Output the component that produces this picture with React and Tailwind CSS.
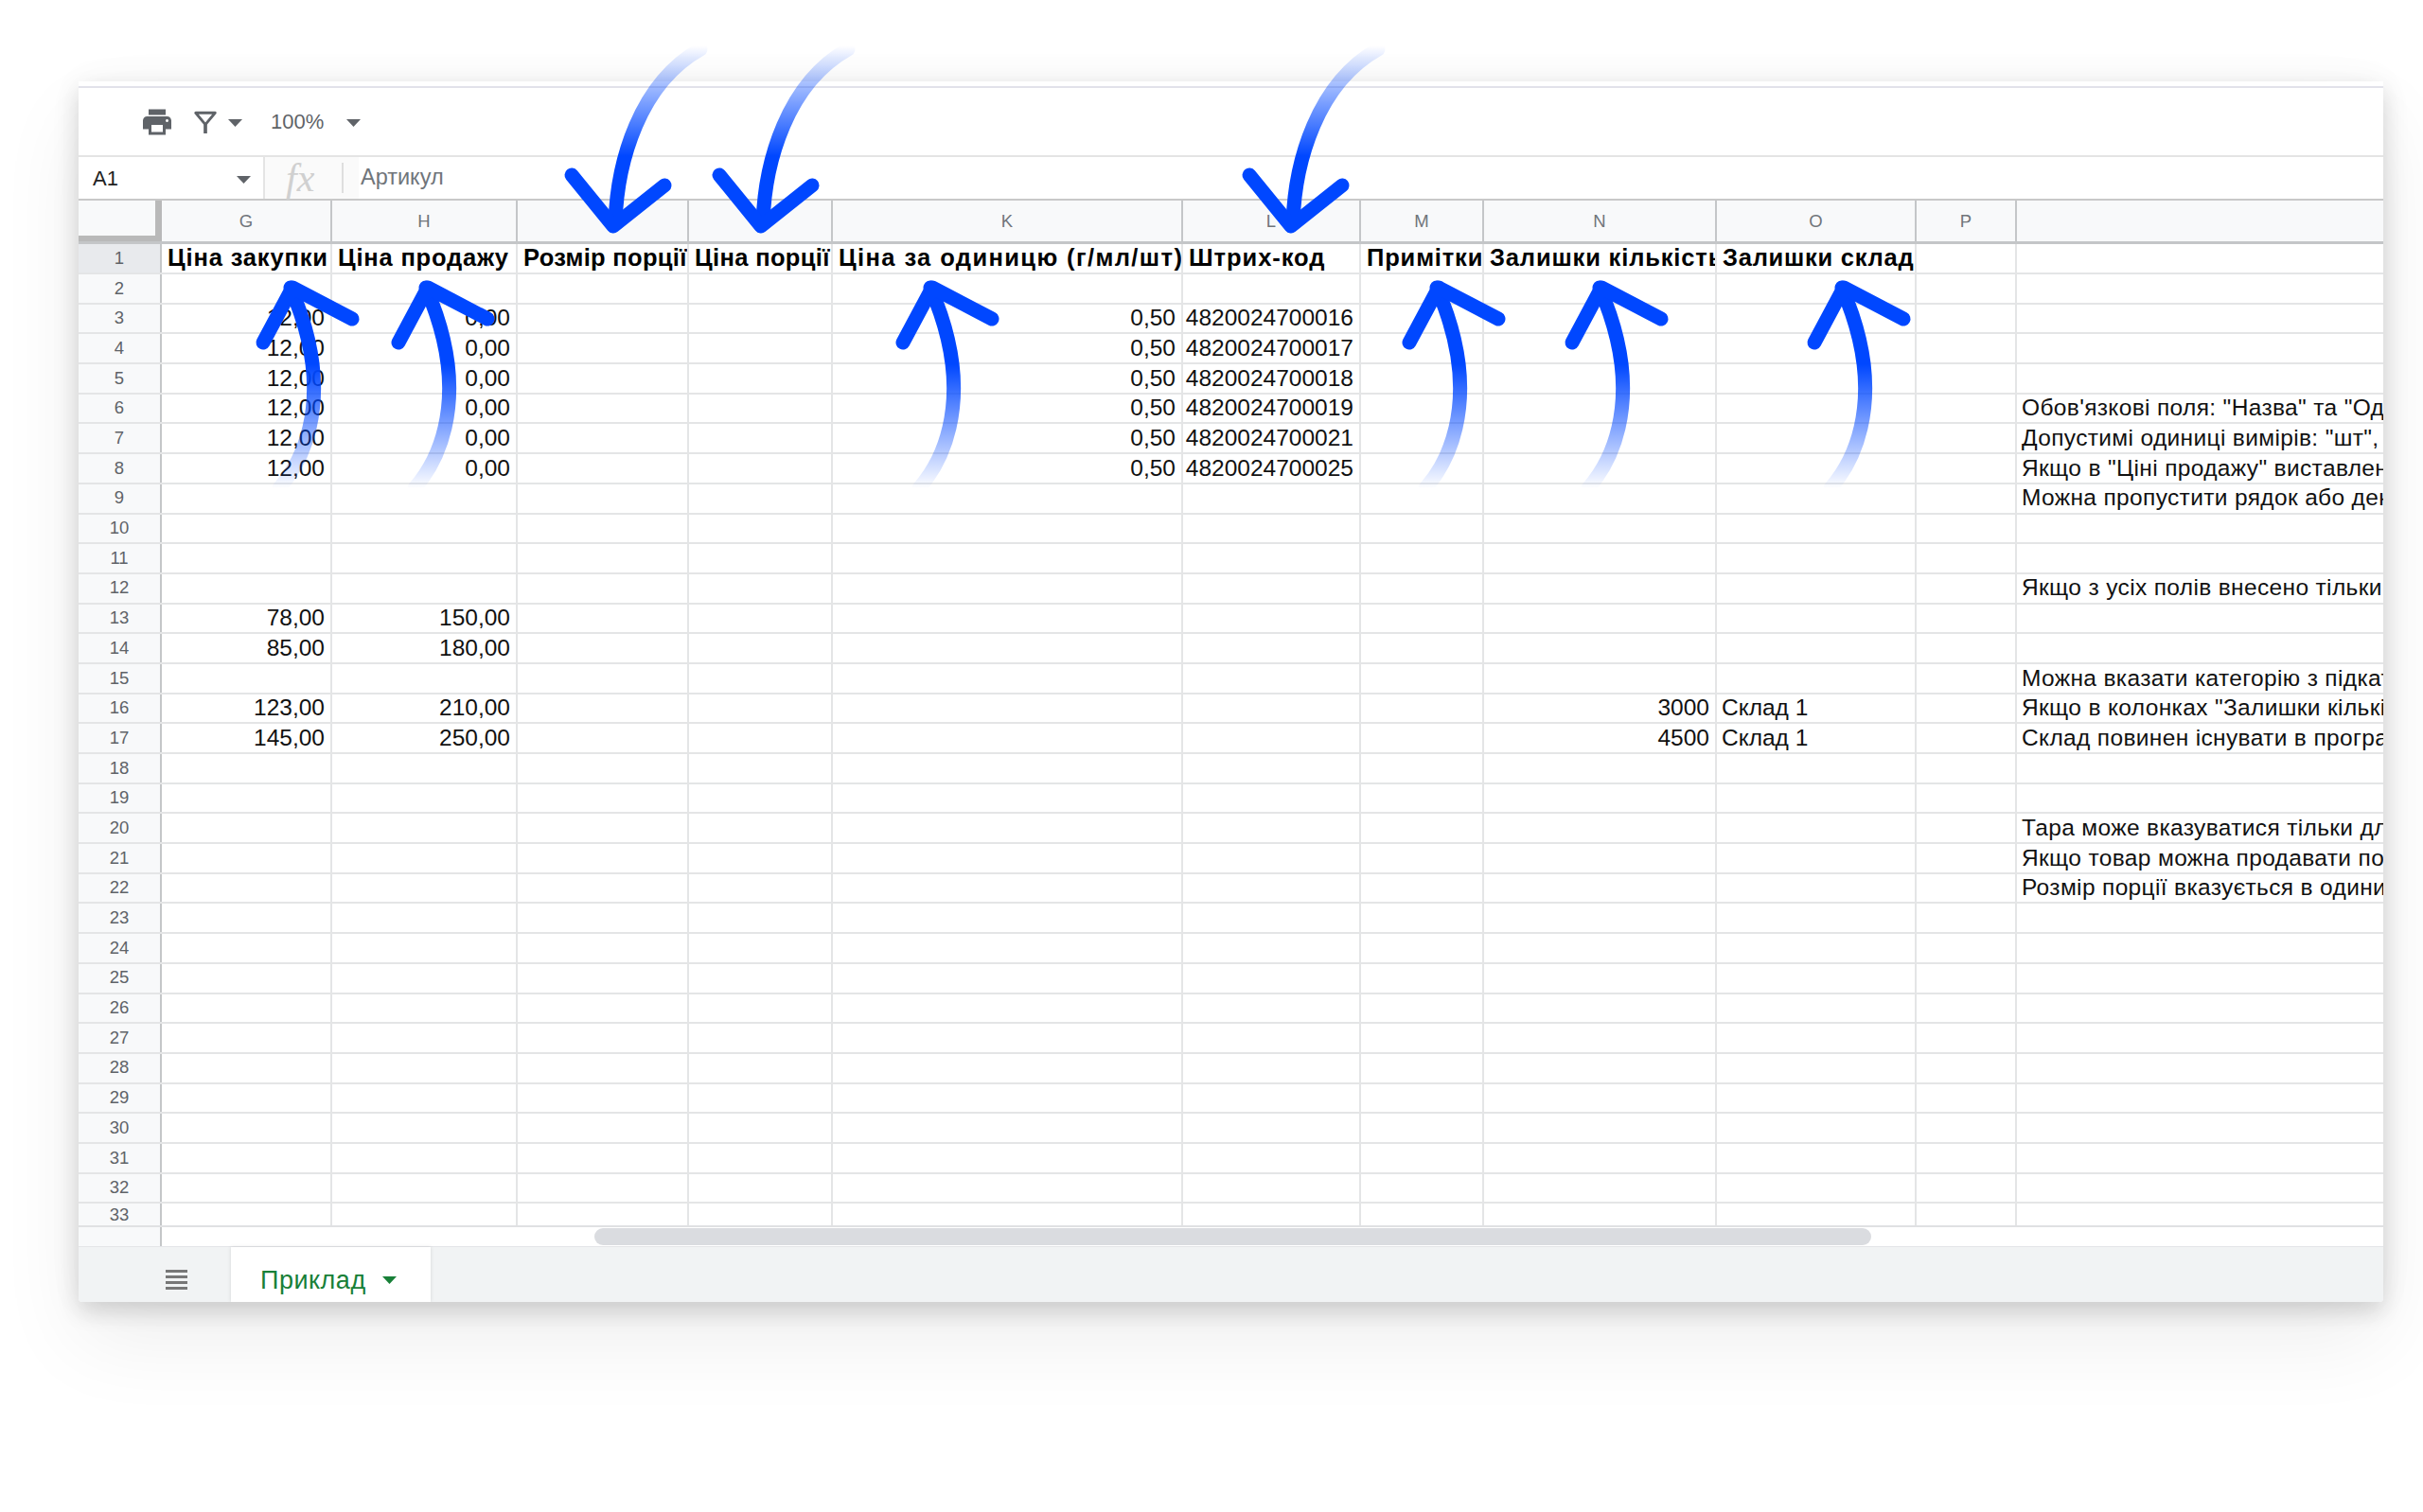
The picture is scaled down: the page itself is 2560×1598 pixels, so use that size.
const cols = "grid grid-cols-[88px_180px_196px_181px_152px_370px_188px_130px_246px_211px_106px_387px]";

const letters = ["G", "H", "", "", "K", "L", "M", "N", "O", "P", ""];
const heads = [
  { text: "Ціна закупки", track: "tracking-[0.85px]" },
  { text: "Ціна продажу", track: "tracking-[0.8px]" },
  { text: "Розмір порції", track: "tracking-[0.3px]" },
  { text: "Ціна порції", track: "tracking-[0.35px]" },
  { text: "Ціна за одиницю (г/мл/шт)", track: "tracking-[1.4px]" },
  { text: "Штрих-код", track: "tracking-[0.95px]" },
  { text: "Примітки", track: "tracking-[0.85px]" },
  { text: "Залишки кількість", track: "tracking-[0.85px]" },
  { text: "Залишки склад", track: "tracking-[0.75px]" },
  { text: "", track: "" },
  { text: "", track: "" },
];

// column order: G H I J K L M N O P Q
const rowData = {
  3: { G: "12,00", H: "0,00", K: "0,50", L: "4820024700016" },
  4: { G: "12,00", H: "0,00", K: "0,50", L: "4820024700017" },
  5: { G: "12,00", H: "0,00", K: "0,50", L: "4820024700018" },
  6: { G: "12,00", H: "0,00", K: "0,50", L: "4820024700019", Q: "Обов'язкові поля: \"Назва\" та \"Одиниця\"" },
  7: { G: "12,00", H: "0,00", K: "0,50", L: "4820024700021", Q: "Допустимі одиниці вимірів: \"шт\", \"кг\"" },
  8: { G: "12,00", H: "0,00", K: "0,50", L: "4820024700025", Q: "Якщо в \"Ціні продажу\" виставлено" },
  9: { Q: "Можна пропустити рядок або декілька" },
  12: { Q: "Якщо з усіх полів внесено тільки назву" },
  13: { G: "78,00", H: "150,00" },
  14: { G: "85,00", H: "180,00" },
  15: { Q: "Можна вказати категорію з підкатегорією" },
  16: { G: "123,00", H: "210,00", N: "3000", O: "Склад 1", Q: "Якщо в колонках \"Залишки кількість\"" },
  17: { G: "145,00", H: "250,00", N: "4500", O: "Склад 1", Q: "Склад повинен існувати в програмі" },
  20: { Q: "Тара може вказуватися тільки для" },
  21: { Q: "Якщо товар можна продавати порціями" },
  22: { Q: "Розмір порції вказується в одиницях" },
};

const keys = ["G", "H", "I", "J", "K", "L", "M", "N", "O", "P", "Q"];
const rightAligned = ["G", "H", "K", "L", "N"];

const upTips = [309, 452, 985, 1520, 1692, 1948];
const downTips = [648, 804, 1364];

function Caret({ className }) {
  return (
    <svg width="15" height="8" viewBox="0 0 15 8" className={className}>
      <path d="M0 0h15L7.5 8z" fill="currentColor" />
    </svg>
  );
}

function Row({ n, data, last }) {
  return (
    <div className={`${cols} ${last ? "h-[23px]" : "h-[31.7px] border-b-2 border-[#e4e5e6]"} text-[24.5px] leading-none text-[#111]`}>
      <div className="flex items-center justify-center border-r-2 border-[#c4c6c8] bg-[#f8f9fa] text-[18.5px] text-[#5f6368]">{n}</div>
      {keys.map((k) => (
        <div
          key={k}
          className={`flex items-center overflow-hidden whitespace-nowrap ${k === "Q" ? "tracking-[0.35px]" : "border-r-2 border-[#e4e5e6]"} ${rightAligned.includes(k) ? "justify-end px-[6px]" : "px-[5px]"}`}
        >
          {data?.[k]}
        </div>
      ))}
    </div>
  );
}

function Arrows() {
  return (
    <svg width="2560" height="1598" viewBox="0 0 2560 1598" fill="none" className="absolute left-0 top-0 pointer-events-none">
      <defs>
        <linearGradient id="upFade" gradientUnits="userSpaceOnUse" x1="0" y1="385" x2="0" y2="516">
          <stop offset="0" stopColor="#0047ff" />
          <stop offset="1" stopColor="#0047ff" stopOpacity="0" />
        </linearGradient>
        <linearGradient id="downFade" gradientUnits="userSpaceOnUse" x1="0" y1="165" x2="0" y2="48">
          <stop offset="0" stopColor="#0047ff" />
          <stop offset="1" stopColor="#0047ff" stopOpacity="0" />
        </linearGradient>
      </defs>
      {upTips.map((x) => (
        <g key={x} transform={`translate(${x} 0)`} strokeLinecap="round" strokeLinejoin="round" strokeWidth="15">
          <path d="M-2 304C18 350 30 400 18 452C12 478 0 500 -14 516" stroke="url(#upFade)" />
          <path d="M-31 362L0 304L63 337" stroke="#0047ff" />
        </g>
      ))}
      {downTips.map((x) => (
        <g key={x} transform={`translate(${x} 0)`} strokeLinecap="round" strokeLinejoin="round" strokeWidth="15">
          <path d="M2 236C4 170 28 88 92 52" stroke="url(#downFade)" />
          <path d="M-44 185L0 239L54 196" stroke="#0047ff" />
        </g>
      ))}
    </svg>
  );
}

export default function App() {
  return (
    <div className="relative h-[1598px] w-[2560px] overflow-hidden bg-white pl-[83px] pt-[86px] font-['Liberation_Sans',Arial,sans-serif]">
      <div className="flex h-[1290px] w-[2435px] flex-col overflow-hidden rounded-b-[4px] bg-white shadow-[0_10px_24px_rgba(0,0,0,0.14),0_40px_90px_rgba(0,0,0,0.07),0_0_40px_rgba(0,0,0,0.04)]">
        {/* toolbar */}
        <div className="mt-[5px] flex h-[75px] items-center border-y-2 border-t-[#e2e2ea] border-b-[#e4e4e4] pl-[65px] text-[#5f6368]">
          <svg width="36" height="36" viewBox="0 0 24 24" fill="currentColor">
            <path d="M19 8H5c-1.66 0-3 1.34-3 3v6h4v4h12v-4h4v-6c0-1.66-1.34-3-3-3zm-3 11H8v-5h8v5zm3-7c-.55 0-1-.45-1-1s.45-1 1-1 1 .45 1 1-.45 1-1 1zm-1-9H6v4h12V3z" />
          </svg>
          <svg width="26" height="26" viewBox="0 0 24 24" fill="none" stroke="currentColor" strokeWidth="2.6" className="ml-[20px]">
            <path d="M2.500 3H21.500L12 14.500Z" strokeLinejoin="round" />
            <path d="M12 14V23" strokeWidth="3.400" />
          </svg>
          <Caret className="ml-[11px] mt-[2px]" />
          <span className="ml-[30px] text-[22px]">100%</span>
          <Caret className="ml-[24px] mt-[2px]" />
        </div>

        {/* formula bar */}
        <div className="flex h-[46px] items-center border-b-2 border-[#c8c8c8]">
          <div className="flex h-full w-[195px] items-center justify-between pl-[15px] pr-[13px] text-[22px] text-[#222]">
            A1
            <Caret className="mt-[4px] text-[#5f6368]" />
          </div>
          <div className="flex h-full w-[101px] items-center border-l-2 border-[#e4e4e4] bg-[#fafafa]">
            <span className="ml-[22px] w-[59px] font-['Liberation_Serif',serif] text-[42px] italic leading-none text-[#d0d0d0]">fx</span>
            <div className="h-[32px] w-[2px] bg-[#dedede]" />
          </div>
          <span className="ml-[2px] text-[23.5px] text-[#70757a]">Артикул</span>
        </div>

        {/* column letters */}
        <div className={`${cols} h-[46px] border-b-[3px] border-[#c4c6c8] bg-[#f8f9fa] text-[18.5px] text-[#70757a]`}>
          <div className="relative border-r-[7px] border-b-[6px] border-[#b9b9b9]" />
          {letters.map((l, i) => (
            <div key={i} className={`flex items-center justify-center ${i === 10 ? "" : "border-r-2 border-[#c4c6c8]"}`}>
              {l}
            </div>
          ))}
        </div>

        {/* header row */}
        <div className={`${cols} h-[32px] border-b-2 border-[#e4e5e6] text-[25.5px] font-bold leading-none text-black`}>
          <div className="flex items-center justify-center border-r-2 border-[#c4c6c8] bg-[#e8eaed] text-[18.5px] font-normal text-[#5f6368]">1</div>
          {heads.map((h, i) => (
            <div key={i} className={`flex items-center overflow-hidden whitespace-nowrap pl-[6px] ${h.track} ${i === 10 ? "" : "border-r-2 border-[#e4e5e6]"}`}>
              {h.text}
            </div>
          ))}
        </div>

        {/* rows 2..33 */}
        {Array.from({ length: 32 }, (_, i) => i + 2).map((n) => (
          <Row key={n} n={n} data={rowData[n]} last={n === 33} />
        ))}

        {/* scrollbar */}
        <div className="flex h-[22px] border-t-2 border-[#e0e1e3]">
          <div className="w-[88px] border-r-2 border-[#c4c6c8] bg-[#f8f9fa]" />
          <div className="ml-[457px] mt-[1px] h-[18px] w-[1349px] rounded-full bg-[#dadce0]" />
        </div>

        {/* sheet tabs */}
        <div className="flex h-[58px] flex-1 border-t border-[#e4e5e8] bg-[#f1f3f4]">
          <div className="ml-[92px] mt-[24px] flex h-[21px] w-[23px] flex-col justify-between">
            <div className="h-[3px] bg-[#777]" />
            <div className="h-[3px] bg-[#777]" />
            <div className="h-[3px] bg-[#777]" />
            <div className="h-[3px] bg-[#777]" />
          </div>
          <div className="ml-[46px] flex h-full w-[211px] items-center bg-white pl-[31px] pt-[12px] text-[#188038] shadow-[0_0_4px_rgba(0,0,0,0.12)]">
            <span className="text-[27px] leading-none tracking-[0.5px]">Приклад</span>
            <Caret className="ml-[17px]" />
          </div>
        </div>
      </div>
      <Arrows />
    </div>
  );
}
